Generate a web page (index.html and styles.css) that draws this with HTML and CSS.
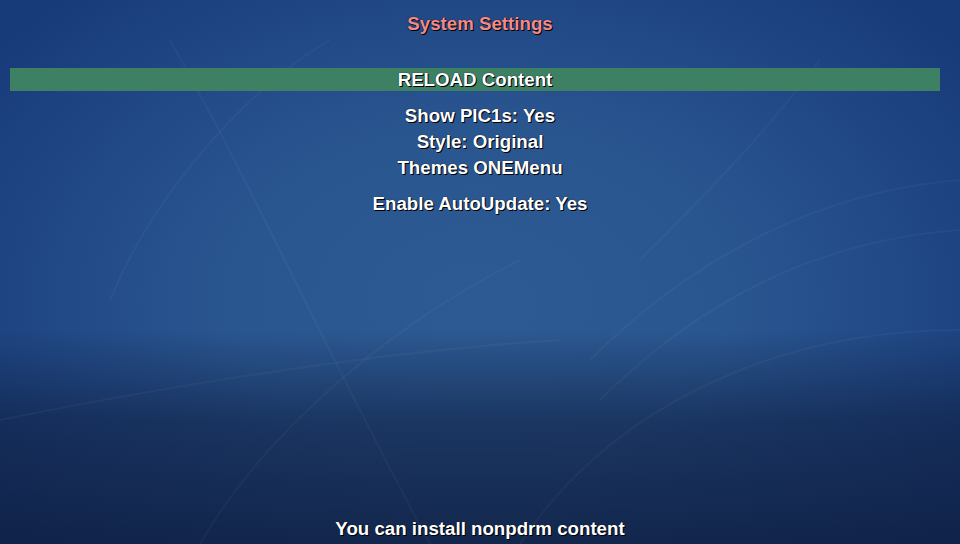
FILE: index.html
```html
<!DOCTYPE html>
<html>
<head>
<meta charset="utf-8">
<link rel="stylesheet" href="styles.css">
</head>
<body>
<div class="screen">
  <svg class="deco" width="960" height="544" viewBox="0 0 960 544">
    <g fill="none" stroke="#ffffff" stroke-opacity="0.035" stroke-width="2">
      <path d="M170 40 C 260 200, 330 360, 430 544"/>
      <path d="M110 300 C 160 180, 260 80, 330 40"/>
      <path d="M590 360 C 700 250, 830 190, 960 180"/>
      <path d="M600 400 C 700 300, 820 240, 960 230"/>
      <path d="M520 544 C 600 420, 760 330, 960 330"/>
      <path d="M0 420 C 200 380, 400 350, 560 340"/>
      <path d="M200 544 C 260 440, 380 330, 520 260"/>
      <path d="M640 260 C 700 200, 760 140, 820 60"/>
    </g>
  </svg>
  <header class="title">System Settings</header>
  <main class="menu">
    <div class="item selected">RELOAD Content</div>
    <div class="group">
      <div class="item">Show PIC1s: Yes</div>
      <div class="item">Style: Original</div>
      <div class="item">Themes ONEMenu</div>
    </div>
    <div class="item">Enable AutoUpdate: Yes</div>
  </main>
  <footer class="hint">You can install nonpdrm content</footer>
</div>
</body>
</html>
```
FILE: styles.css
```css
html, body {
  margin: 0;
  padding: 0;
  width: 960px;
  height: 544px;
  overflow: hidden;
}
.screen {
  position: relative;
  width: 960px;
  height: 544px;
  display: flex;
  flex-direction: column;
  align-items: stretch;
  font-family: "Liberation Sans", Arial, sans-serif;
  font-weight: bold;
  font-size: 18.7px;
  color: #ffffff;
  text-shadow: 1px 1px 0 #000, 0 0 1px #000;
  background:
    linear-gradient(180deg, rgba(12,26,56,0) 0px, rgba(12,26,56,0) 330px, rgba(14,28,60,0.55) 420px, rgba(14,28,60,0.78) 544px),
    radial-gradient(ellipse 620px 420px at 480px 300px, #2d5a92 0%, #2a5690 40%, #1f4683 75%, #173a78 100%);
  background-color: #1a3f7c;
}
.deco {
  position: absolute;
  left: 0;
  top: 0;
  pointer-events: none;
}
.title {
  position: relative;
  text-align: center;
  color: #f48a88;
  padding-top: 13px;
  height: 55px;
  line-height: 22px;
  box-sizing: border-box;
}
.menu {
  position: relative;
  display: flex;
  flex-direction: column;
  margin-top: 13px;
  flex: 1;
}
.item {
  text-align: center;
  line-height: 26px;
  height: 26px;
}
.item.selected {
  background: #3e8064;
  margin: 0 20px 0 10px;
  height: 23px;
  line-height: 23px;
  margin-bottom: 12px;
}
.group {
  display: flex;
  flex-direction: column;
  margin-bottom: 10px;
}
.hint {
  position: relative;
  text-align: center;
  line-height: 22px;
  padding-bottom: 4px;
}
```
